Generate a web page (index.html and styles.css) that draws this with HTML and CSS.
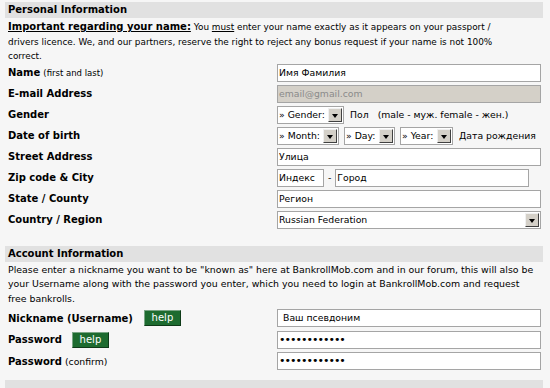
FILE: index.html
```html
<!DOCTYPE html>
<html>
<head>
<meta charset="utf-8">
<link rel="stylesheet" href="styles.css">
</head>
<body>
<div class="wrap">
  <div class="section-head">Personal Information</div>
  <p class="note note1"><b class="u">Important regarding your name:</b> You <span class="u">must</span> enter your name exactly as it appears on your passport /<br>drivers licence. We, and our partners, reserve the right to reject any bonus request if your name is not 100%<br>correct.</p>
  <div class="rows">
    <div class="row"><div class="label"><b>Name</b> <small>(first and last)</small></div><div class="ctl"><div class="field full">Имя Фамилия</div></div></div>
    <div class="row"><div class="label"><b>E-mail Address</b></div><div class="ctl"><div class="field full disabled">email@gmail.com</div></div></div>
    <div class="row"><div class="label"><b>Gender</b></div><div class="ctl"><div class="sel w-gender"><span class="sel-text">» Gender:</span><span class="btn"></span></div><span class="hint">Пол</span><span class="hint2">(male - муж. female - жен.)</span></div></div>
    <div class="row"><div class="label"><b>Date of birth</b></div><div class="ctl"><div class="sel w-month"><span class="sel-text">» Month:</span><span class="btn"></span></div><div class="sel w-day"><span class="sel-text">» Day:</span><span class="btn"></span></div><div class="sel w-year"><span class="sel-text">» Year:</span><span class="btn"></span></div><span class="hint">Дата рождения</span></div></div>
    <div class="row"><div class="label"><b>Street Address</b></div><div class="ctl"><div class="field full">Улица</div></div></div>
    <div class="row"><div class="label"><b>Zip code &amp; City</b></div><div class="ctl"><div class="field zip">Индекс</div><span class="dash">-</span><div class="field city">Город</div></div></div>
    <div class="row"><div class="label"><b>State / County</b></div><div class="ctl"><div class="field full">Регион</div></div></div>
    <div class="row"><div class="label"><b>Country / Region</b></div><div class="ctl"><div class="sel full"><span class="sel-text">Russian Federation</span><span class="btn"></span></div></div></div>
  </div>
  <div class="section-head second">Account Information</div>
  <p class="note note2">Please enter a nickname you want to be "known as" here at BankrollMob.com and in our forum, this will also be your Username along with the password you enter, which you need to login at BankrollMob.com and request<br>free bankrolls.</p>
  <div class="rows rows2">
    <div class="row"><div class="label"><b>Nickname (Username)</b><span class="help help-nick">help</span></div><div class="ctl"><div class="field full pad">Ваш псевдоним</div></div></div>
    <div class="row"><div class="label"><b>Password</b><span class="help help-pass">help</span></div><div class="ctl"><div class="field full dots">••••••••••••</div></div></div>
    <div class="row"><div class="label"><b>Password</b> <span class="norm">(confirm)</span></div><div class="ctl"><div class="field full dots">••••••••••••</div></div></div>
  </div>
  <div class="section-head bottom"></div>
</div>
</body>
</html>
```
FILE: styles.css
```css
html, body {
  margin: 0;
  padding: 0;
  background: #f6f6f6;
}
body {
  font-family: "DejaVu Sans", Verdana, sans-serif;
  font-size: 9.3px;
  color: #000;
}
b {
  font-size: 10px;
}
.wrap {
  padding: 2px 7px 0 5px;
}
.section-head {
  background: #e1e1e1;
  height: 16px;
  line-height: 16px;
  padding-left: 3px;
  font-weight: bold;
  font-size: 10px;
}
.note {
  margin: 0;
  padding: 2px 3px 0 3px;
  line-height: 14.5px;
}
.note1 {
  font-size: 8.9px;
}
.note2 {
  font-size: 9.4px;
  padding-top: 1px;
  padding-right: 0;
}
.u { text-decoration: underline; }
.rows {
  padding-top: 0;
  display: flex;
  flex-direction: column;
  gap: 3px;
}
.row {
  display: flex;
  align-items: center;
  height: 18px;
}
.label {
  width: 272px;
  padding-left: 3px;
  box-sizing: border-box;
  display: flex;
  align-items: center;
  gap: 3px;
  white-space: nowrap;
}
.label small {
  font-size: 8.5px;
}
.label .norm { font-weight: normal; }
.ctl {
  display: flex;
  align-items: center;
  flex: 1;
  gap: 5px;
  white-space: nowrap;
}
.field {
  height: 18px;
  box-sizing: border-box;
  border: 1px solid #a5a5a5;
  background: #fff;
  line-height: 16px;
  padding-left: 1px;
  white-space: nowrap;
  overflow: hidden;
}
.full { width: 264px; }
.disabled {
  background: #d4d0c8;
  color: #8a8a8a;
}
.zip { width: 47px; }
.city { width: 194px; }
.dash { margin: 0 -1px; }
.pad { padding-left: 5px; }
.dots {
  font-size: 11px;
  letter-spacing: -1px;
  line-height: 16px;
}
.sel {
  height: 18px;
  box-sizing: border-box;
  border: 1px solid #a5a5a5;
  background: #fff;
  display: flex;
  align-items: center;
  justify-content: space-between;
  padding: 0 1px 0 1px;
  white-space: nowrap;
  gap: 2px;
}
.w-gender { width: 67px; }
.w-month { width: 62px; }
.w-day { width: 51px; }
.w-year { width: 53px; }
.btn {
  width: 14px;
  height: 14px;
  box-sizing: border-box;
  background: #d4d0c8;
  border-top: 1px solid #f0f0f0;
  border-left: 1px solid #f0f0f0;
  border-right: 1px solid #404040;
  border-bottom: 1px solid #404040;
  position: relative;
  flex: none;
}
.btn::after {
  content: "";
  position: absolute;
  left: 3px;
  top: 5px;
  border-left: 3.5px solid transparent;
  border-right: 3.5px solid transparent;
  border-top: 4px solid #000;
}
.hint { margin-left: 1px; }
.hint2 { margin-left: 4px; }
.help {
  display: inline-block;
  height: 16px;
  width: 37px;
  text-align: center;
  line-height: 14px;
  box-sizing: border-box;
  background: #1d6b2f;
  color: #fff;
  font-weight: normal;
  font-size: 10px;
  border: 1px solid #7aa585;
  border-right-color: #0e3a18;
  border-bottom-color: #0e3a18;
}
.help-nick { margin-left: 8px; }
.help-pass { margin-left: 7px; }
.second { margin-top: 17px; }
.rows2 { padding-top: 3px; gap: 3.5px; }
.bottom { margin-top: 10px; }
```
